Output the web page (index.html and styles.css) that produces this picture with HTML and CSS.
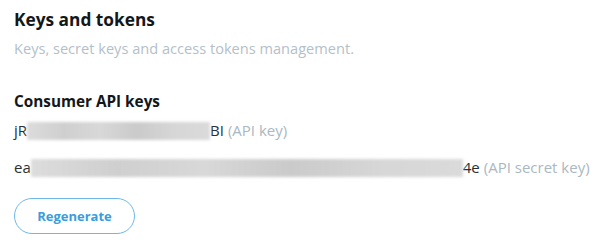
FILE: index.html
```html
<!DOCTYPE html>
<html lang="en">
<head>
<meta charset="utf-8">
<title>Keys and tokens</title>
<link rel="stylesheet" href="styles.css">
</head>
<body>
<main class="page">
  <header class="head">
    <h1 class="title">Keys and tokens</h1>
    <p class="subtitle">Keys, secret keys and access tokens management.</p>
  </header>
  <section class="keys">
    <h2 class="keys-title">Consumer API keys</h2>
    <div class="key-row">
      <span class="key-val">jR</span><span class="redact" style="width:183px"></span><span class="key-val">BI</span>
      <span class="key-label">(API key)</span>
    </div>
    <div class="key-row">
      <span class="key-val">ea</span><span class="redact" style="width:432px"></span><span class="key-val">4e</span>
      <span class="key-label">(API secret key)</span>
    </div>
    <button class="btn" type="button">Regenerate</button>
  </section>
</main>
</body>
</html>
```
FILE: styles.css
```css
html, body {
  margin: 0;
  padding: 0;
  background: #ffffff;
}
body {
  font-family: "Open Sans", "Noto Sans", sans-serif;
  color: #14171a;
}
.page {
  padding: 8px 14px 0 14px;
}
.title {
  margin: 0;
  font-size: 17.3px;
  line-height: 24px;
  font-weight: 700;
  color: #14171a;
}
.subtitle {
  margin: 6px 0 0 0;
  font-size: 14.6px;
  line-height: 20px;
  color: #b4c0c9;
}
.keys {
  margin-top: 33px;
}
.keys-title {
  margin: 0;
  font-size: 15.3px;
  line-height: 20px;
  font-weight: 700;
}
.key-row {
  display: flex;
  align-items: center;
  height: 19px;
  margin-top: 10px;
  font-size: 15px;
  line-height: 19px;
}
.key-row + .key-row {
  margin-top: 18px;
}
.key-val {
  color: #292f33;
}
.redact {
  display: inline-block;
  height: 18px;
  background: linear-gradient(90deg, #dcdcdc 0%, #cfcfcf 20%, #d8d8d8 40%, #cacaca 60%, #d6d6d6 80%, #dadada 100%);
  filter: blur(1.5px);
}
.key-label {
  margin-left: 4px;
  color: #aab8c2;
}
.btn {
  display: block;
  margin-top: 21px;
  width: 121px;
  height: 36px;
  border: 1px solid #6db8e8;
  border-radius: 18px;
  background: #ffffff;
  color: #3a9ddc;
  font-family: "Open Sans", "Noto Sans", sans-serif;
  font-size: 13px;
  font-weight: 700;
  padding: 0;
}
```
